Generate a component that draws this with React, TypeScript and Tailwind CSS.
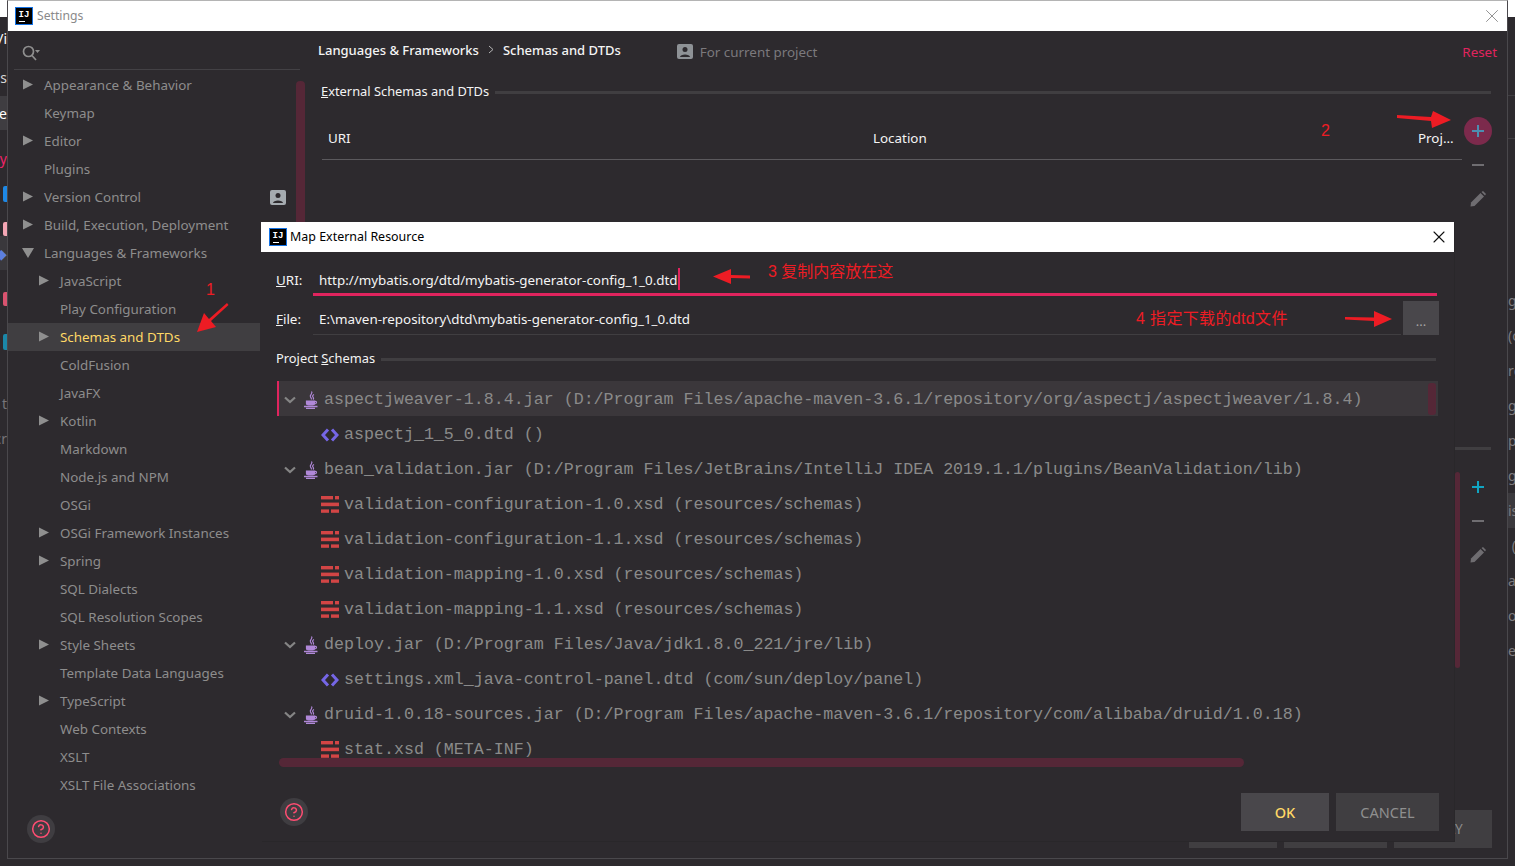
import { CircleHelp, X } from "lucide-react";

const UI = "font-['Noto_Sans','Open_Sans',sans-serif]";
const MONO = "font-['Liberation_Mono',monospace]";
const CJK = "font-['Liberation_Sans','Noto_Sans_CJK_SC',sans-serif]";

type NavItem = { label: string; level: 0 | 1; arrow?: "right" | "down"; selected?: boolean; badge?: boolean };

const nav: NavItem[] = [
  { label: "Appearance & Behavior", level: 0, arrow: "right" },
  { label: "Keymap", level: 0 },
  { label: "Editor", level: 0, arrow: "right" },
  { label: "Plugins", level: 0 },
  { label: "Version Control", level: 0, arrow: "right", badge: true },
  { label: "Build, Execution, Deployment", level: 0, arrow: "right" },
  { label: "Languages & Frameworks", level: 0, arrow: "down" },
  { label: "JavaScript", level: 1, arrow: "right" },
  { label: "Play Configuration", level: 1 },
  { label: "Schemas and DTDs", level: 1, arrow: "right", selected: true },
  { label: "ColdFusion", level: 1 },
  { label: "JavaFX", level: 1 },
  { label: "Kotlin", level: 1, arrow: "right" },
  { label: "Markdown", level: 1 },
  { label: "Node.js and NPM", level: 1 },
  { label: "OSGi", level: 1 },
  { label: "OSGi Framework Instances", level: 1, arrow: "right" },
  { label: "Spring", level: 1, arrow: "right" },
  { label: "SQL Dialects", level: 1 },
  { label: "SQL Resolution Scopes", level: 1 },
  { label: "Style Sheets", level: 1, arrow: "right" },
  { label: "Template Data Languages", level: 1 },
  { label: "TypeScript", level: 1, arrow: "right" },
  { label: "Web Contexts", level: 1 },
  { label: "XSLT", level: 1 },
  { label: "XSLT File Associations", level: 1 },
];

type TreeRow = { text: string; kind: "jar" | "dtd" | "xsd"; selected?: boolean };

const tree: TreeRow[] = [
  { text: "aspectjweaver-1.8.4.jar (D:/Program Files/apache-maven-3.6.1/repository/org/aspectj/aspectjweaver/1.8.4)", kind: "jar", selected: true },
  { text: "aspectj_1_5_0.dtd ()", kind: "dtd" },
  { text: "bean_validation.jar (D:/Program Files/JetBrains/IntelliJ IDEA 2019.1.1/plugins/BeanValidation/lib)", kind: "jar" },
  { text: "validation-configuration-1.0.xsd (resources/schemas)", kind: "xsd" },
  { text: "validation-configuration-1.1.xsd (resources/schemas)", kind: "xsd" },
  { text: "validation-mapping-1.0.xsd (resources/schemas)", kind: "xsd" },
  { text: "validation-mapping-1.1.xsd (resources/schemas)", kind: "xsd" },
  { text: "deploy.jar (D:/Program Files/Java/jdk1.8.0_221/jre/lib)", kind: "jar" },
  { text: "settings.xml_java-control-panel.dtd (com/sun/deploy/panel)", kind: "dtd" },
  { text: "druid-1.0.18-sources.jar (D:/Program Files/apache-maven-3.6.1/repository/com/alibaba/druid/1.0.18)", kind: "jar" },
  { text: "stat.xsd (META-INF)", kind: "xsd" },
];

// clipped bits of the windows behind the dialog
const leftBits: { t?: string; c: string; bar?: string }[] = [
  { t: "/i", c: "h-[40px] text-white" },
  { t: "ss", c: "h-[38px] text-[#d8d8d8]" },
  { t: "e", c: "h-[34px] text-white bg-[#3f3d41]" },
  { t: "y", c: "h-[56px] text-[#f0246a]" },
  { c: "h-[16px]", bar: "bg-[#1e88e5]" },
  { c: "mt-[20px] h-[14px]", bar: "bg-[#f4a6b4]" },
  { t: "◆", c: "h-[34px] text-[#5c7fe0] bg-[#3a383c]" },
  { c: "mt-[22px] h-[14px]", bar: "bg-[#d9536f]" },
  { c: "mt-[28px] h-[16px]", bar: "bg-[#1b87a8]" },
  { t: "t", c: "mt-[43px] h-[20px] text-[#77757a]" },
  { t: "cr", c: "mt-[15px] h-[20px] text-[#77757a]" },
];
const rightBits = ["g.", "(c", "rg", "g", "pa", "ge", "is", " (", "ap", "or", "es"];

function IjLogo() {
  return (
    <div className="flex h-[16px] w-[16px] flex-col items-center justify-center bg-black outline-1 outline-[#1473e6]">
      <span className={`${MONO} text-[9px] font-bold leading-[9px] text-white`}>IJ</span>
      <span className="mt-[1px] mr-[5px] h-[1px] w-[6px] bg-white" />
    </div>
  );
}

function Triangle({ dir }: { dir: "right" | "down" }) {
  return (
    <svg width="12" height="12" viewBox="0 0 12 12" className="shrink-0">
      <polygon points={dir === "right" ? "1,0.5 11,5.5 1,10.5" : "0,1 12,1 6,11"} fill="#8f8f8f" />
    </svg>
  );
}

function Chevron() {
  return (
    <svg width="12" height="8" viewBox="0 0 12 8" className="shrink-0">
      <path d="M1 1.5 L6 6 L11 1.5" fill="none" stroke="#858585" strokeWidth="2.2" />
    </svg>
  );
}

function JarIcon() {
  return (
    <svg width="16" height="18" viewBox="0 0 16 18" className="shrink-0" fill="none" stroke="#b088d8" strokeWidth="1.2">
      <path d="M8.5 0.5 C10.5 2.5 6 4 7.5 6 C8.2 7 8.8 7.5 8.2 8.5" />
      <path d="M11 3.5 C9 4.5 9.5 5.5 10.3 6.5 C10.8 7.2 10.5 8 10 8.5" />
      <path d="M3.5 10 H11.5 V12.5 C11.5 13.5 10.5 14 9.5 14 H5.5 C4.5 14 3.5 13.5 3.5 12.5 Z" fill="#b088d8" />
      <path d="M11.5 10.5 C14 10 14.5 12.5 11 13" />
      <path d="M1 15.5 H14.5 M3 17.5 H12" strokeWidth="1.4" />
    </svg>
  );
}

function DtdIcon() {
  return (
    <svg width="18" height="14" viewBox="0 0 18 14" className="shrink-0" fill="none" stroke="#7566e6" strokeWidth="3">
      <path d="M7 1.5 L2 7 L7 12.5 M11 1.5 L16 7 L11 12.5" />
    </svg>
  );
}

function XsdIcon() {
  return (
    <svg width="18" height="17" viewBox="0 0 18 17" className="shrink-0" fill="#d24545">
      <rect x="0" y="0" width="12" height="3.4" />
      <rect x="14" y="0" width="4" height="3.4" />
      <rect x="0" y="6.6" width="18" height="3.6" />
      <rect x="0" y="13.4" width="8" height="3.4" />
      <rect x="10" y="13.4" width="8" height="3.4" />
    </svg>
  );
}

function Pencil() {
  return (
    <svg width="16" height="16" viewBox="0 0 16 16" fill="#6f6d71">
      <path d="M0.5 15.5 L1 11.5 L10.5 2 L14 5.5 L4.5 15 Z" />
      <path d="M11.5 1 L13 0 L16 3 L15 4.5 Z" />
    </svg>
  );
}

function ProfileBadge({ color }: { color: string }) {
  return (
    <svg width="16" height="15" viewBox="0 0 16 15">
      <rect x="0" y="0" width="16" height="15" rx="2" fill={color} />
      <circle cx="8" cy="5.5" r="2.5" fill="#2d2a2e" />
      <path d="M3 13 C3 9.5 13 9.5 13 13 Z" fill="#2d2a2e" />
    </svg>
  );
}

function HelpButton() {
  return (
    <div className="flex h-[28px] w-[28px] items-center justify-center rounded-full bg-[#3f3d41]">
      <CircleHelp size={20} color="#ff4d72" strokeWidth={1.8} />
    </div>
  );
}

function Sidebar() {
  return (
    <aside className="flex w-[253px] shrink-0 flex-col">
      <div className="ml-[6px] flex h-[39px] w-[286px] shrink-0 items-center border-b border-[#434145] pl-[8px] pt-[5px]">
        <svg width="18" height="16" viewBox="0 0 18 16" fill="none" stroke="#8f8f8f" strokeWidth="1.7">
          <circle cx="6.5" cy="6.5" r="5" />
          <path d="M10 10.5 L14 15" />
          <polygon points="13,5 18,5 15.5,8" fill="#8f8f8f" stroke="none" />
        </svg>
      </div>
      <nav className="mt-[1px] flex flex-col">
        {nav.map((item) => (
          <div
            key={item.label}
            className={`flex h-[28px] items-center whitespace-nowrap text-[13.4px] ${item.selected ? "mr-[1px] bg-[#403e41] text-[#ffd866]" : "text-[#8d8d8d]"} ${item.level === 0 ? "pl-[14px]" : "pl-[30px]"}`}
          >
            <span className="mr-[10px] flex w-[12px] justify-center">
              {item.arrow && <Triangle dir={item.arrow} />}
            </span>
            <span>{item.label}</span>
            {item.badge && (
              <span className="ml-auto mr-[-25px]">
                <ProfileBadge color="#a5abb0" />
              </span>
            )}
          </div>
        ))}
      </nav>
      <div className="mt-auto pb-[15px] pl-[19px]">
        <HelpButton />
      </div>
    </aside>
  );
}

function MainBehind() {
  return (
    <main className="relative flex min-w-0 flex-1 flex-col">
      <div className="absolute left-[35px] top-[50px] h-[200px] w-[9px] rounded-t-[4px] bg-[#552737]" />
      <div className="absolute left-[1194px] top-[441px] h-[196px] w-[5px] rounded-[3px] bg-[#552737]" />

      <header className="flex h-[40px] shrink-0 items-center whitespace-nowrap pl-[57px] pr-[10px]">
        <span className="text-[13px] font-medium text-[#f4f4f4]">Languages &amp; Frameworks</span>
        <svg width="6" height="9" viewBox="0 0 6 9" className="mx-[9px] -translate-y-[2px]" fill="none" stroke="#b5b5b5">
          <path d="M1 1 L5 4.5 L1 8" />
        </svg>
        <span className="text-[13px] font-medium text-[#f4f4f4]">Schemas and DTDs</span>
        <span className="ml-[56px]">
          <ProfileBadge color="#8e9296" />
        </span>
        <span className="ml-[7px] translate-y-[1px] text-[13.4px] text-[#7b797d]">For current project</span>
        <span className="ml-auto translate-y-[1px] text-[13.4px] text-[#e0245e]">Reset</span>
      </header>

      <div className="mt-[11px] flex h-[20px] shrink-0 items-center pl-[60px] pr-[16px] text-[12.85px] text-[#f4f4f4]">
        <span className="whitespace-nowrap">
          <u>E</u>xternal Schemas and DTDs
        </span>
        <span className="ml-[6px] h-[3px] flex-1 bg-[#403e41]" />
      </div>

      <div className="mt-[15px] flex shrink-0 pl-[61px]">
        <div className="grid h-[43px] flex-1 grid-cols-[545px_545px_1fr] items-center border-b border-[#5b595d] pl-[6px] pt-[1px] text-[13.4px] text-[#f4f4f4]">
          <span>URI</span>
          <span>Location</span>
          <span>Proj...</span>
        </div>
        <div className="flex w-[45px] flex-col items-center pr-[13px]">
          <div className="flex h-[28px] w-[28px] shrink-0 items-center justify-center rounded-full bg-[#7c2a4c]">
            <svg width="14" height="14" viewBox="0 0 14 14" stroke="#4d8db0" strokeWidth="2">
              <path d="M7 1 V13 M1 7 H13" />
            </svg>
          </div>
          <span className="mt-[19px] h-[2px] w-[12px] bg-[#6f6d71]" />
          <span className="mt-[25px]">
            <Pencil />
          </span>
        </div>
      </div>

      <div className="mt-[240px] flex shrink-0 justify-end pr-[16px]">
        <span className="h-[3px] w-[36px] bg-[#403e41]" />
      </div>

      <div className="mt-[30px] ml-auto flex w-[45px] flex-col items-center pr-[13px]">
        <svg width="14" height="14" viewBox="0 0 14 14" stroke="#10a5c2" strokeWidth="2">
          <path d="M7 1 V13 M1 7 H13" />
        </svg>
        <span className="mt-[26px] h-[2px] w-[12px] bg-[#6f6d71]" />
        <span className="mt-[25px]">
          <Pencil />
        </span>
      </div>

      <div className="mt-auto flex justify-end gap-[7px] pb-[10px] pr-[15px] text-[13.6px] text-[#8b8b8b]">
        <span className="h-[38px] w-[88px] bg-[#403e41]" />
        <span className="h-[38px] w-[103px] bg-[#403e41]" />
        <span className="flex h-[38px] w-[98px] items-center justify-center bg-[#403e41]">APPLY</span>
      </div>
    </main>
  );
}

function ResourceDialog() {
  return (
    <section className="absolute left-[261px] top-[222px] flex h-[619px] w-[1193px] flex-col bg-[#2d2a2e] shadow-[1px_1px_0_#29272a]">
      <div className="flex h-[30px] shrink-0 items-center bg-white pl-[9px] pr-[5px]">
        <IjLogo />
        <span className={`${UI} ml-[4px] text-[12.45px] text-black`}>Map External Resource</span>
        <X size={20} className="ml-auto" color="#111" strokeWidth={1.3} />
      </div>

      <div className="mt-[10px] flex h-[34px] shrink-0 pl-[15px] pr-[17px] text-[13.4px] text-[#f4f4f4]">
        <span className="flex w-[37px] items-center pt-[3px]">
          <span>
            <u>U</u>RI:
          </span>
        </span>
        <div className="flex flex-1 items-center border-b-[3px] border-[#e0245e] pl-[6px]">
          <span className="h-[22px] translate-y-[1px] border-r-2 border-[#e0245e] pt-[1px] leading-[22px]">http://mybatis.org/dtd/mybatis-generator-config_1_0.dtd</span>
        </div>
      </div>

      <div className="mt-[5px] flex h-[34px] shrink-0 pl-[15px] pr-[15px] text-[13.4px] text-[#f4f4f4]">
        <span className="flex w-[37px] items-center pt-[3px]">
          <span>
            <u>F</u>ile:
          </span>
        </span>
        <div className="flex flex-1 items-center border-b border-[#403e41] pl-[6px] pt-[4px]">E:\maven-repository\dtd\mybatis-generator-config_1_0.dtd</div>
        <div className="ml-[2px] flex w-[36px] items-end justify-center bg-[#49474b] pb-[4px] text-[13px] text-[#a5a5a5]">...</div>
      </div>

      <div className="mt-[14px] flex h-[20px] shrink-0 items-center pl-[15px] pr-[18px] text-[12.85px] text-[#f4f4f4]">
        <span className="whitespace-nowrap">
          Project <u>S</u>chemas
        </span>
        <span className="ml-[6px] h-[3px] flex-1 bg-[#403e41]" />
      </div>

      <div className={`${MONO} relative mx-[16px] mt-[12px] h-[386px] shrink-0 overflow-hidden text-[16.65px] text-[#8a8a8a]`}>
        {tree.map((row) => (
          <div
            key={row.text}
            className={`flex h-[35px] items-center whitespace-pre pt-[2px] ${row.selected ? "bg-[#3b373b]" : ""} ${row.kind === "jar" ? "pl-[7px]" : "pl-[44px]"}`}
          >
            {row.selected && <span className="absolute left-0 top-0 h-[35px] w-[2px] bg-[#e0245e]" />}
            {row.kind === "jar" && (
              <>
                <Chevron />
                <span className="ml-[7px] mr-[5px]">
                  <JarIcon />
                </span>
              </>
            )}
            {row.kind === "dtd" && (
              <span className="mr-[5px]">
                <DtdIcon />
              </span>
            )}
            {row.kind === "xsd" && (
              <span className="mr-[5px]">
                <XsdIcon />
              </span>
            )}
            <span className="translate-y-[1px]">{row.text}</span>
          </div>
        ))}
        <div className="absolute right-[2px] top-[2px] h-[32px] w-[8px] rounded-[3px] bg-[#552737]" />
        <div className="absolute left-[2px] top-[377px] h-[9px] w-[965px] rounded-[5px] bg-[#552737]" />
      </div>

      <div className="mt-auto flex items-center pb-[10px] pl-[19px] pr-[15px]">
        <HelpButton />
        <button className="ml-auto h-[38px] w-[88px] bg-[#49474b] pt-[1px] text-[14.5px] font-medium text-[#ffd866]">OK</button>
        <button className="ml-[7px] h-[38px] w-[103px] bg-[#403e41] pt-[1px] text-[14.5px] text-[#8f8f8f]">CANCEL</button>
      </div>
    </section>
  );
}

function Annotations() {
  return (
    <>
      <svg className="pointer-events-none absolute left-0 top-0" width="1515" height="866" fill="#ed1c24">
        {/* 1 */}
        <path d="M227 303 L228.5 305 L211 321 L216 327 L197 332 L204 313 L209 319 Z" />
        {/* 2 */}
        <path d="M1397 115 L1431 117 L1433 111 L1451 120 L1432 128 L1431 121 L1397 118 Z" />
        {/* 3 */}
        <path d="M750 275.5 V278.5 L731 278 L731 284 L713 276.5 L731 269 L731 275 Z" />
        {/* 4 */}
        <path d="M1345 317 L1374 317.5 V311 L1392 319 L1374 327 V321 L1345 319.5 Z" />
      </svg>
      <span className={`${CJK} absolute left-[206px] top-[281px] text-[16px] leading-[18px] text-[#ed1c24]`}>1</span>
      <span className={`${CJK} absolute left-[1321px] top-[122px] text-[16px] leading-[18px] text-[#ed1c24]`}>2</span>
      <span className={`${CJK} absolute left-[768px] top-[262px] whitespace-pre text-[16px] leading-[20px] text-[#ed1c24]`}>3 复制内容放在这</span>
      <span className={`${CJK} absolute left-[1136px] top-[309px] whitespace-pre text-[16px] leading-[20px] tracking-[0.35px] text-[#ed1c24]`}>4 指定下载的dtd文件</span>
    </>
  );
}

export default function App() {
  return (
    <div className={`${UI} relative flex h-[866px] w-[1515px] overflow-hidden bg-[#2d2a2e]`}>
      {/* left edge of the window behind */}
      <div className="flex w-[7px] shrink-0 flex-col overflow-hidden text-[14px]">
        <div className="mb-[1px] h-[17px] shrink-0 bg-white" />
        {leftBits.map((b, i) => (
          <div key={i} className={`flex shrink-0 items-center justify-end whitespace-nowrap ${b.c}`}>
            {b.bar ? <span className={`h-full w-[4px] rounded-l-[2px] ${b.bar}`} /> : b.t}
          </div>
        ))}
      </div>

      <div className="flex h-[859px] w-[1501px] shrink-0 flex-col border border-[#4a484c] border-t-[#b4b4b4]">
        <div className="flex h-[30px] shrink-0 items-center bg-white pl-[8px] pr-[4px]">
          <IjLogo />
          <span className="ml-[5px] text-[12.2px] text-[#8a8a8a]">Settings</span>
          <X size={22} className="ml-auto" color="#8a8a8a" strokeWidth={1} />
        </div>
        <div className="flex min-h-0 flex-1">
          <Sidebar />
          <MainBehind />
        </div>
      </div>

      {/* right edge of the window behind */}
      <div className="flex flex-1 flex-col overflow-hidden text-[14px] text-[#7d7b7f]">
        <div className="h-[17px] shrink-0 bg-white" />
        <div className="h-[79px] shrink-0 border-b border-[#3f3d41]" />
        <div className="mb-[144px] h-[43px] shrink-0 border-b border-[#3f3d41]" />
        {rightBits.map((t, i) => (
          <div key={i} className={`flex h-[35px] shrink-0 items-center whitespace-pre ${t === "is" ? "bg-[#3b393d]" : ""}`}>
            {t}
          </div>
        ))}
      </div>

      <ResourceDialog />
      <Annotations />
    </div>
  );
}
